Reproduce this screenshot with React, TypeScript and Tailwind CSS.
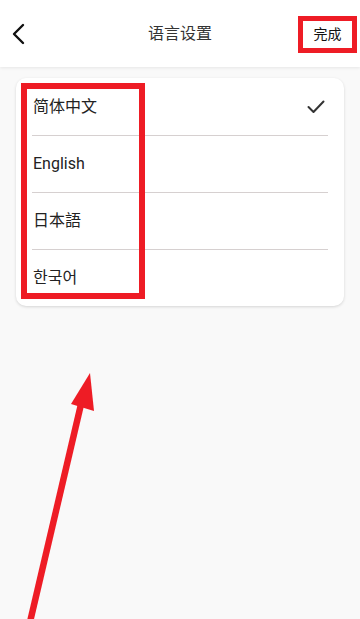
import React from 'react';

const LANGUAGES = ['简体中文', 'English', '日本語', '한국어'];
const SELECTED = 0;

const FONT = {
  fontFamily: 'Roboto, "Noto Sans CJK SC", "Noto Sans CJK KR", "Noto Sans CJK JP", sans-serif',
};

const BackIcon = () => (
  <svg width="14" height="22" viewBox="0 0 14 22" fill="none">
    <path d="M12 2 L3 11 L12 20" stroke="#111" strokeWidth="2.4" strokeLinecap="round" strokeLinejoin="round" />
  </svg>
);

const CheckIcon = () => (
  <svg width="18" height="14" viewBox="0 0 18 14" fill="none">
    <path d="M1.5 7 L6.5 12 L16.5 1.5" stroke="#333" strokeWidth="2" strokeLinecap="round" strokeLinejoin="round" />
  </svg>
);

// Annotation arrow drawn over the page
const Arrow = () => (
  <svg className="absolute left-0 top-0 pointer-events-none" width="360" height="619" viewBox="0 0 360 619">
    <line x1="30" y1="622" x2="82" y2="400" stroke="#ee1c25" strokeWidth="6.5" />
    <polygon points="90,373 71,404 94,411" fill="#ee1c25" />
  </svg>
);

export default function App() {
  return (
    <div className="relative w-[360px] h-[619px] flex flex-col bg-[#f9f9f9] overflow-hidden" style={FONT}>
      {/* header */}
      <div className="relative h-[67px] shrink-0 bg-white flex items-center justify-between shadow-[0_1px_3px_rgba(0,0,0,0.08)] z-10">
        <button className="w-[40px] h-full flex items-center pl-[11px]">
          <BackIcon />
        </button>
        <h1 className="absolute left-0 right-0 text-center text-[16px] text-[#333] pointer-events-none leading-none">语言设置</h1>
        <button className="mr-[3px] w-[59px] h-[37px] border-[5px] border-[#ee1c25] flex items-center justify-center text-[14px] text-[#111] mt-[1px]">
          完成
        </button>
      </div>

      {/* list */}
      <div className="flex-1 px-[16px] pt-[11px]">
        <div className="relative bg-white rounded-[10px] shadow-[0_1px_3px_rgba(0,0,0,0.15)] pt-[1px]">
          {LANGUAGES.map((lang, i) => (
            <div key={lang}>
              {i > 0 && <div className="mx-[16px] h-px bg-[#d6d0d0]" />}
              <div className="h-[56px] flex items-center justify-between pl-[17px] pr-[19px]">
                <span className="text-[16px] text-[#222]">{lang}</span>
                {i === SELECTED && <CheckIcon />}
              </div>
            </div>
          ))}
          {/* annotation box */}
          <div className="absolute left-[5px] top-[5px] w-[124px] h-[216px] border-[6px] border-[#ee1c25] pointer-events-none" />
        </div>
      </div>

      <Arrow />
    </div>
  );
}
